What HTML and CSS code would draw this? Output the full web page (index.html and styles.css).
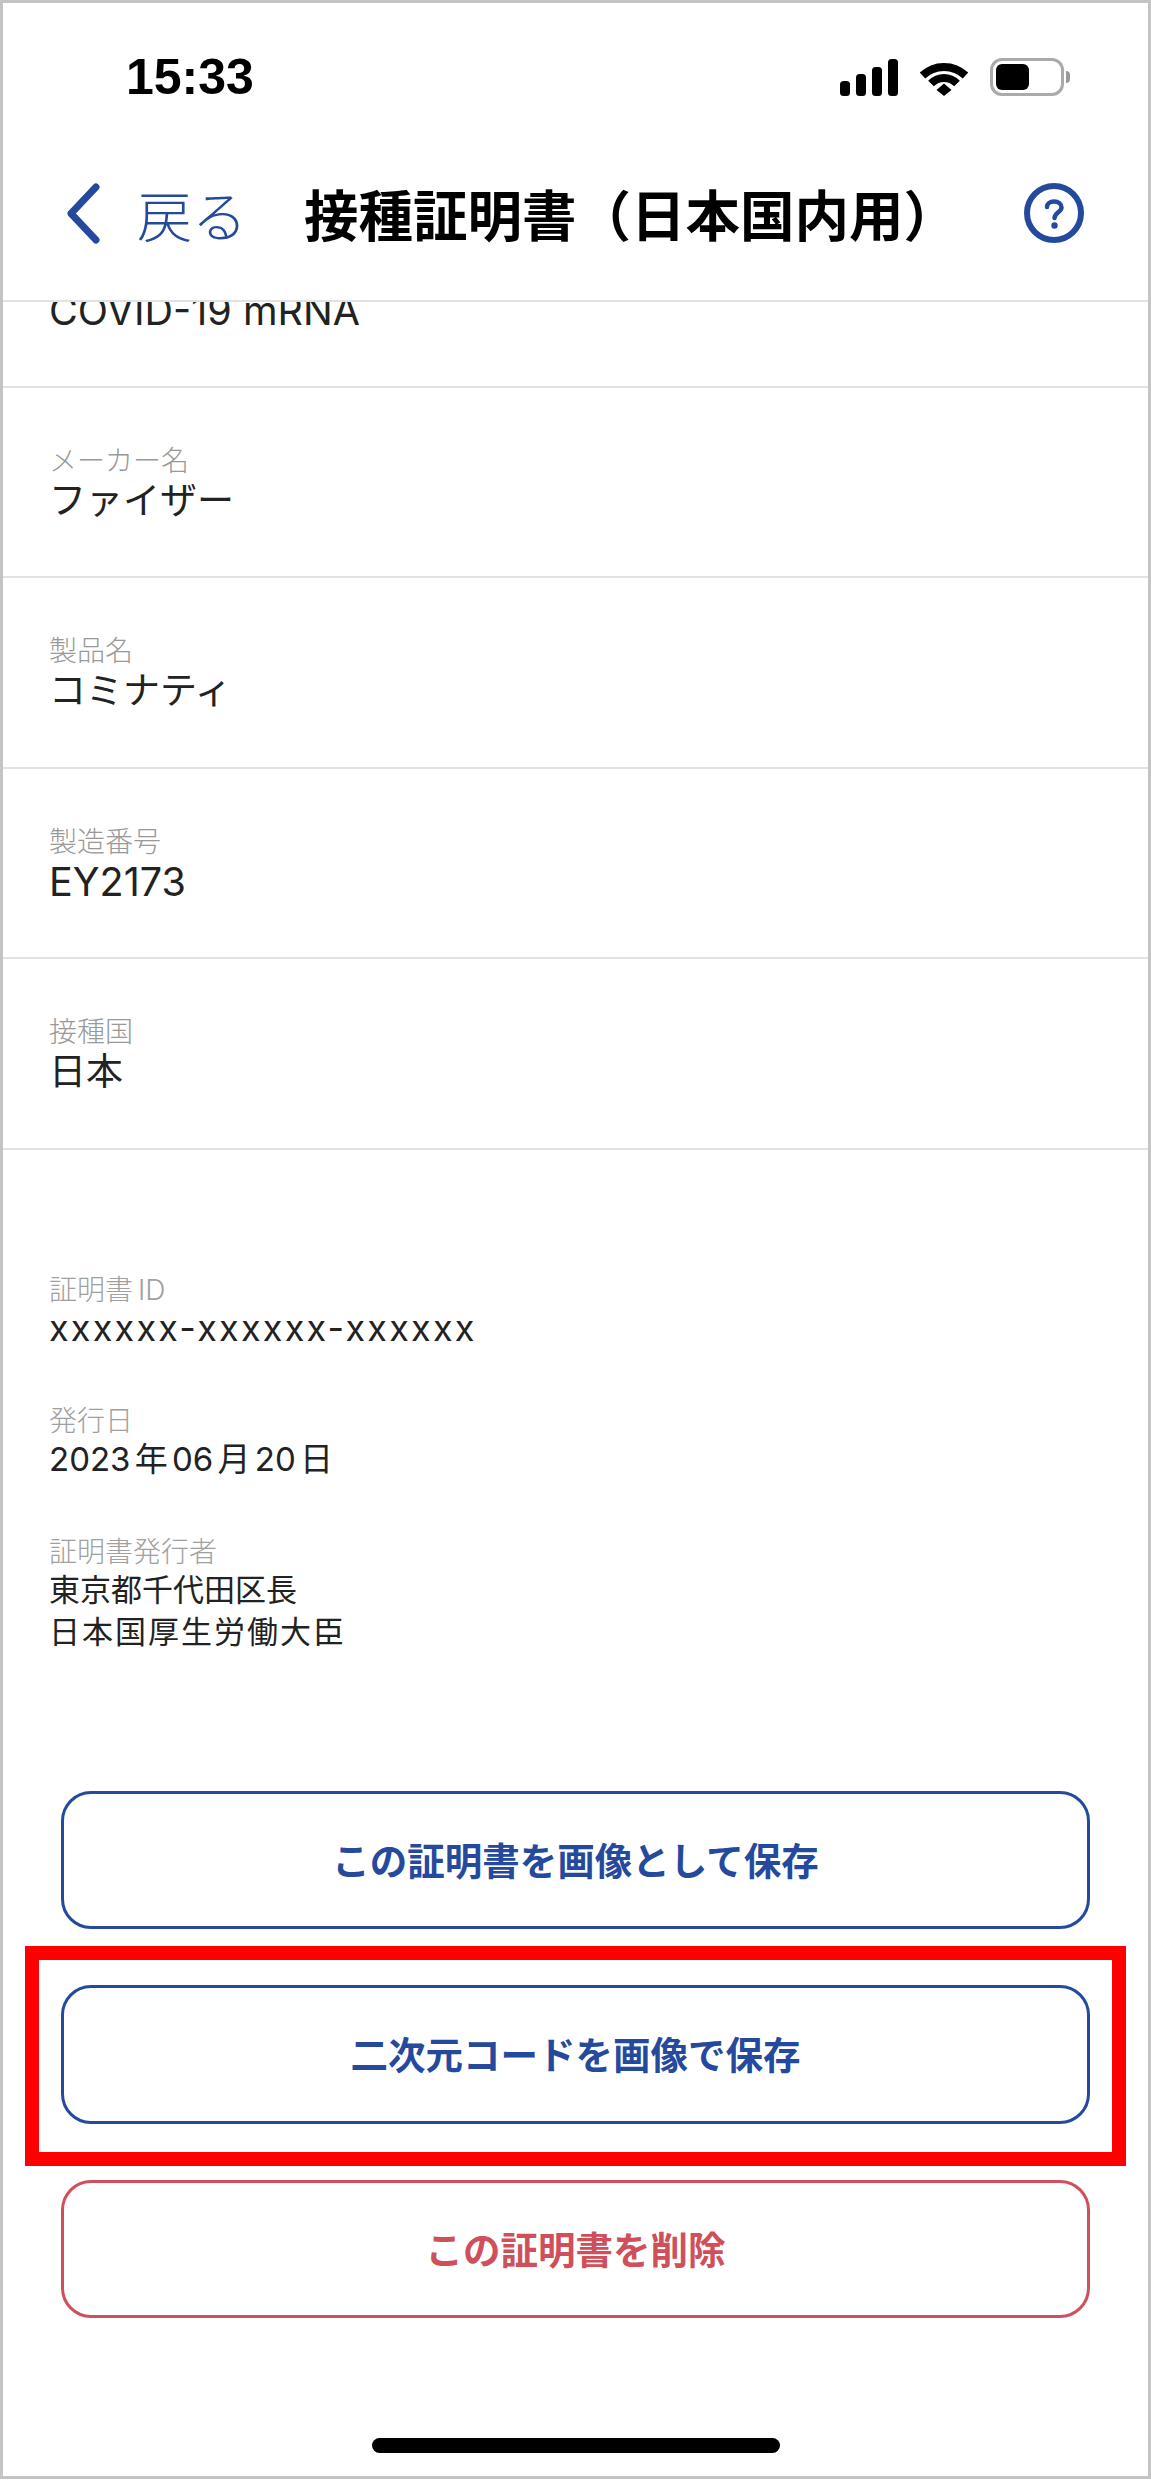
FILE: index.html
```html
<!DOCTYPE html>
<html lang="ja">
<head>
<meta charset="utf-8">
<title>接種証明書（日本国内用）</title>
<link rel="stylesheet" href="styles.css">
</head>
<body>
<div class="frame">
  <header class="top">
    <div class="status">
      <span class="time">15:33</span>
      <div class="status-icons">
        <svg class="signal" width="58" height="38" viewBox="0 0 58 38"><rect x="0" y="23" width="10" height="15" rx="3.5"/><rect x="16" y="16" width="10" height="22" rx="3.5"/><rect x="32" y="9" width="10" height="29" rx="3.5"/><rect x="48" y="1" width="10" height="37" rx="3.5"/></svg>
        <svg class="wifi" width="50" height="38" viewBox="0 0 50 38"><path d="M3.500 17.500C15.500 6 34.500 6 46.500 17.500" fill="none" stroke="#000" stroke-width="8"/><path d="M12 25.500C19.500 18 30.500 18 38 25.500" fill="none" stroke="#000" stroke-width="8"/><path d="M17.500 32L25 25.500L32.500 32L25 38Z"/></svg>
        <div class="battery"><div class="battery-fill"></div></div>
        <div class="battery-nub"></div>
      </div>
    </div>
    <nav class="nav">
      <div class="back">
        <svg width="35" height="61" viewBox="0 0 35 61"><path d="M30 4L5 30.500L30 57" fill="none" stroke="#254a9d" stroke-width="7" stroke-linecap="round" stroke-linejoin="round"/></svg>
        <span class="back-label">戻る</span>
      </div>
      <h1 class="title">接種証明書（日本国内用）</h1>
      <svg class="help" width="60" height="60" viewBox="0 0 60 60"><circle cx="30" cy="30" r="27" fill="none" stroke="#254a9d" stroke-width="6"/><path d="M23 24C23 20.500 26 18.500 30 18.500C34.500 18.500 37.500 21 37.500 24.500C37.500 29 30.500 29.500 30.500 35" fill="none" stroke="#254a9d" stroke-width="4.500" stroke-linecap="round"/><circle cx="30.500" cy="42.500" r="3.200" fill="#254a9d"/></svg>
    </nav>
  </header>

  <main class="scroll">
    <div class="rows">
      <section class="row row-first"><div class="value value-latin">COVID-19 mRNA</div></section>
      <section class="row"><div class="label">メーカー名</div><div class="value">ファイザー</div></section>
      <section class="row"><div class="label">製品名</div><div class="value">コミナティ</div></section>
      <section class="row"><div class="label">製造番号</div><div class="value value-latin">EY2173</div></section>
      <section class="row"><div class="label">接種国</div><div class="value">日本</div></section>
    </div>
    <div class="meta">
      <div class="meta-item"><div class="meta-label">証明書 ID</div><div class="meta-value meta-id">xxxxxx-xxxxxx-xxxxxx</div></div>
      <div class="meta-item"><div class="meta-label">発行日</div><div class="meta-value meta-date">2023 年 06 月 20 日</div></div>
      <div class="meta-item"><div class="meta-label">証明書発行者</div><div class="meta-value">東京都千代田区長<br><span class="meta-wide">日本国厚生労働大臣</span></div></div>
    </div>
    <div class="actions">
      <button class="btn">この証明書を画像として保存</button>
      <div class="marked">
        <button class="btn">二次元コードを画像で保存</button>
        <div class="mark"></div>
      </div>
      <button class="btn btn-danger">この証明書を削除</button>
    </div>
  </main>
  <div class="home-bar"></div>
</div>
</body>
</html>
```
FILE: styles.css
```css
* { box-sizing: border-box; }
html, body { margin: 0; padding: 0; background: #fff; }
body { font-family: Inter, "Noto Sans CJK JP", sans-serif; color: #222; }

.frame {
  position: relative;
  width: 1151px;
  height: 2479px;
  border: 3px solid #c4c4c4;
  display: flex;
  flex-direction: column;
  overflow: hidden;
  background: #fff;
}

.top { height: 299px; flex: none; border-bottom: 2px solid #e2e2e2; }

.status { display: flex; justify-content: space-between; align-items: flex-start; padding: 55px 78px 0 123px; height: 175px; }
.time { font-family: "Liberation Sans", sans-serif; font-weight: 700; font-size: 50px; line-height: 38px; color: #000; }
.status-icons { display: flex; align-items: center; height: 38px; }
.signal { margin-right: 21px; }
.wifi { margin-right: 21px; }
.battery { width: 74px; height: 38px; border: 3px solid #aaa; border-radius: 12px; padding: 3px; background: #fff; }
.battery-fill { width: 33px; height: 26px; background: #000; border-radius: 6px; }
.battery-nub { width: 4px; height: 12px; margin-left: 2px; background: #999; border-radius: 0 6px 6px 0; }

.nav { display: flex; align-items: center; height: 62px; padding: 0 64px 0 63px; margin-top: 4px; }
.back { display: flex; align-items: center; width: 238px; flex: none; }
.back-label { margin-left: 36px; font-family: "Noto Sans CJK JP", sans-serif; font-size: 55px; font-weight: 300; line-height: 60px; color: #254a9d; }
.title { margin: 0; flex: 1; font-family: "Noto Sans CJK JP", sans-serif; font-size: 54.500px; font-weight: 700; line-height: 60px; color: #000; white-space: nowrap; }
.help { flex: none; }

.scroll { flex: 1; overflow: hidden; min-height: 0; }
.rows { margin-top: -105px; }
.row { height: 190.6px; padding: 57px 46px 0; border-bottom: 2px solid #e2e2e2; }
.label { font-size: 28px; font-weight: 300; line-height: 33px; color: #999; }
.value { font-size: 37px; font-weight: 400; line-height: 46px; color: #222; }
.value-latin { font-size: 39.500px; }
.row-first { padding-top: 91px; }

.meta { padding: 124px 46px 0; }
.meta-item { margin-bottom: 56px; }
.meta-item:last-child { margin-bottom: 0; }
.meta-label { font-size: 28px; font-weight: 300; line-height: 33px; color: #a0a0a0; word-spacing: -3px; }
.meta-value { font-size: 31px; line-height: 42px; color: #222; }
.meta-id { font-size: 36px; letter-spacing: 2.200px; }
.meta-date { font-size: 33px; word-spacing: -5px; }
.meta-wide { letter-spacing: 2px; }

.actions { display: flex; flex-direction: column; gap: 56px; padding: 0 58px; margin-top: 138px; }
.btn {
  display: block;
  width: 100%;
  height: 138.500px;
  padding: 0 0 4px;
  background: #fff;
  border: 3px solid #254a9d;
  border-radius: 30px;
  font-family: "Noto Sans CJK JP", sans-serif;
  font-size: 37.500px;
  font-weight: 700;
  color: #254a9d;
}
.btn-danger { border-color: #cf4f5a; color: #cf4f5a; }
.marked { position: relative; }
.mark { position: absolute; left: -36px; right: -36px; top: -39px; bottom: -42px; border: 14px solid #f00; pointer-events: none; }

.home-bar { position: absolute; left: 369px; top: 2435px; width: 408px; height: 15px; border-radius: 8px; background: #000; }
```
